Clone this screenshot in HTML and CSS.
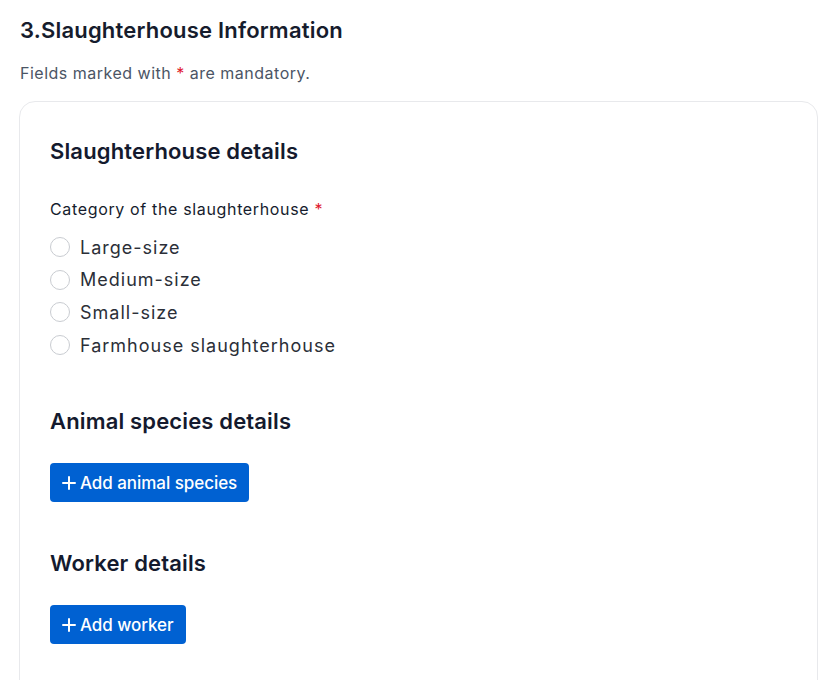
FILE: index.html
```html
<!DOCTYPE html>
<html lang="en">
<head>
<meta charset="utf-8">
<title>Slaughterhouse Information</title>
<link rel="stylesheet" href="styles.css">
</head>
<body>
<main class="page">
  <h1 class="title">3.Slaughterhouse Information</h1>
  <p class="note">Fields marked with <span class="req">*</span> are mandatory.</p>
  <section class="card">
    <h2 class="section-title">Slaughterhouse details</h2>
    <div class="field">
      <div class="label">Category of the slaughterhouse <span class="req">*</span></div>
      <div class="radios">
        <label class="radio"><span class="circle"></span><span>Large-size</span></label>
        <label class="radio"><span class="circle"></span><span>Medium-size</span></label>
        <label class="radio"><span class="circle"></span><span>Small-size</span></label>
        <label class="radio"><span class="circle"></span><span>Farmhouse slaughterhouse</span></label>
      </div>
    </div>
    <h2 class="section-title sp2">Animal species details</h2>
    <button class="btn" type="button"><svg class="plus" viewBox="0 0 14 14" width="14" height="14"><path d="M7 1v12M1 7h12" stroke="#fff" stroke-width="2" stroke-linecap="round" fill="none"/></svg>Add animal species</button>
    <h2 class="section-title sp3">Worker details</h2>
    <button class="btn" type="button"><svg class="plus" viewBox="0 0 14 14" width="14" height="14"><path d="M7 1v12M1 7h12" stroke="#fff" stroke-width="2" stroke-linecap="round" fill="none"/></svg>Add worker</button>
  </section>
</main>
</body>
</html>
```
FILE: styles.css
```css
* { box-sizing: border-box; }
html, body { margin: 0; padding: 0; background: #fff; }
body {
  font-family: Inter, "Noto Sans", sans-serif;
  color: #161c2d;
  height: 680px;
  overflow: hidden;
}
.page {
  padding: 16px 18px 0 19px;
}
.title {
  margin: 0 0 0 1px;
  font-size: 22px;
  line-height: 28px;
  font-weight: 600;
  letter-spacing: 0.2px;
  color: #161c2d;
}
.note {
  margin: 19px 0 0 1px;
  font-size: 16px;
  line-height: 20px;
  color: #4b5565;
  letter-spacing: 0.5px;
}
.req { color: #e0182d; }
.card {
  margin-top: 18px;
  border: 1px solid #e8e9ec;
  border-radius: 16px;
  background: #fff;
  padding: 35px 30px 60px 30px;
  height: 620px;
}
.section-title {
  margin: 0;
  font-size: 22px;
  line-height: 28px;
  font-weight: 600;
  letter-spacing: 0.15px;
  color: #141a2e;
}
.field { margin-top: 34px; }
.label {
  font-size: 16px;
  line-height: 20px;
  color: #161c2d;
  letter-spacing: 0.65px;
}
.radios {
  margin-top: 12px;
  display: flex;
  flex-direction: column;
}
.radio {
  display: flex;
  align-items: center;
  gap: 10px;
  height: 32.6px;
  font-size: 18px;
  color: #2b2f38;
  letter-spacing: 1px;
}
.circle {
  width: 20px;
  height: 20px;
  border-radius: 50%;
  border: 1px solid #c9ccd1;
  background: #fff;
  flex: none;
}
.sp2 { margin-top: 46px; }
.sp3 { margin-top: 47px; }
.btn {
  margin-top: 28px;
  display: flex;
  width: max-content;
  align-items: center;
  gap: 4px;
  height: 39px;
  padding: 0 12px 0 12px;
  background: #0061d2;
  color: #fff;
  border: 0;
  border-radius: 4px;
  font-family: Inter, "Noto Sans", sans-serif;
  font-size: 17px;
  font-weight: 500;
  letter-spacing: -0.05px;
}
.plus { flex: none; }
```
